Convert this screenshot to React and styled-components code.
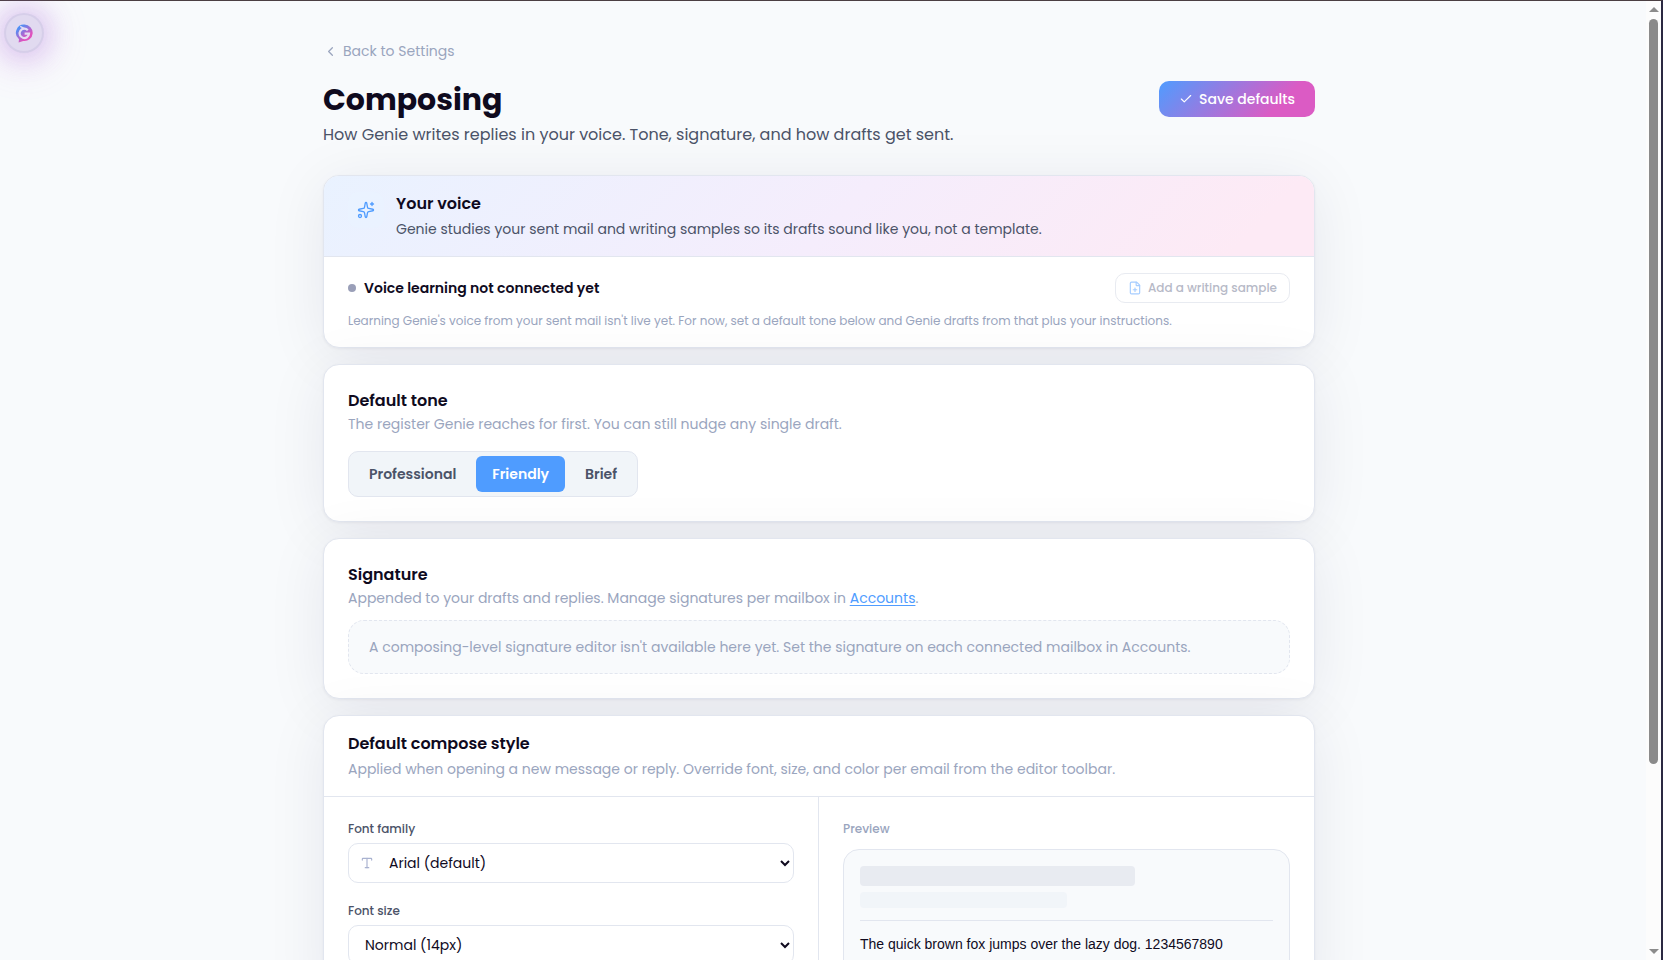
import React, { useState } from 'react';
import styled, { createGlobalStyle } from 'styled-components';
import { Check, ChevronLeft, FilePlus, Sparkles, Type } from 'lucide-react';

const GlobalStyle = createGlobalStyle`
  * {
    box-sizing: border-box;
  }

  :root {
    --bg: #f8fafc;
    --card: #ffffff;
    --ink: #0f0a1e;
    --ink-soft: #4b5368;
    --muted: #9aa5be;
    --line: #e2e6ef;
    --blue: #4f9cff;
    --pink: #db5bc4;
  }

  body {
    margin: 0;
    background: var(--bg);
    color: var(--ink);
    font-family: Poppins, Inter, sans-serif;
    font-size: 14px;
    line-height: 21px;
  }

  h1, h2, p {
    margin: 0;
  }

  button, select {
    font-family: inherit;
  }
`;

const Frame = styled.div`
  display: grid;
  grid-template-columns: minmax(0, 1fr) 15px;
  height: 100vh;
  overflow: hidden;
  border-top: 1px solid #4b3f42;
  border-right: 2px solid #2b2942;
`;

const Viewport = styled.div`
  overflow: hidden;
`;

const Scrollbar = styled.div`
  display: flex;
  flex-direction: column;
  align-items: center;
  justify-content: space-between;
  padding: 6px 0;
  background: #fcfcfc;
`;

const ScrollArrow = styled.span`
  border: 5px solid transparent;
  border-top-width: 0;
  border-bottom: 5px solid #8b8b8b;
  transform: ${({ $down }) => ($down ? 'rotate(180deg)' : 'none')};
`;

const ScrollTrack = styled.div`
  flex: 1;
  width: 9px;
  margin: 7px 0;
`;

const ScrollThumb = styled.div`
  height: 80.7%;
  border-radius: 5px;
  background: #8b8b8b;
`;

const Page = styled.main`
  max-width: 1040px;
  margin: 0 auto;
  padding: 40px 28px 40px 20px;
`;

const BackLink = styled.a`
  display: flex;
  align-items: center;
  gap: 5px;
  width: fit-content;
  color: var(--muted);
  text-decoration: none;
`;

const PageHeader = styled.header`
  display: flex;
  align-items: flex-start;
  justify-content: space-between;
  margin: 16px 0 28px;
`;

const PageTitle = styled.h1`
  font-size: 30px;
  line-height: 44px;
  font-weight: 700;
`;

const PageLead = styled.p`
  margin-top: 1px;
  font-size: 16px;
  line-height: 24px;
  color: var(--ink-soft);
`;

const SaveButton = styled.button`
  display: flex;
  align-items: center;
  justify-content: center;
  gap: 6px;
  height: 36px;
  margin-top: 3px;
  padding: 0 20px;
  border: 0;
  border-radius: 10px;
  color: white;
  background: linear-gradient(135deg, var(--blue) 0%, var(--pink) 75%);
  font-size: 14px;
  font-weight: 500;
`;

const Cards = styled.div`
  display: flex;
  flex-direction: column;
  gap: 16px;
`;

const Card = styled.section`
  border: 1px solid var(--line);
  border-radius: 16px;
  background: var(--card);
  box-shadow: 0 1px 3px rgba(20, 15, 60, 0.05), 0 8px 60px rgba(20, 15, 60, 0.08);
`;

const PaddedCard = styled(Card)`
  padding: 24px;
`;

const CardHeader = styled.div`
  display: flex;
  gap: 12px;
  padding: 16px 24px;
  border-bottom: 1px solid var(--line);
  border-radius: 15px 15px 0 0;
  background: ${({ $tinted }) =>
    $tinted ? 'linear-gradient(135deg, #e9f2ff 0%, #f5edfc 52%, #fdeaf5 92%)' : 'none'};
`;

const IconTile = styled.div`
  display: grid;
  place-items: center;
  width: 36px;
  height: 36px;
  border-radius: 10px;
  color: var(--blue);
  background: rgba(233, 244, 255, 0.6);
`;

const CardTitle = styled.h2`
  font-size: 16px;
  line-height: 24px;
  font-weight: 600;
`;

const CardText = styled.p`
  margin-top: ${({ $roomy }) => ($roomy ? '3px' : '1px')};
  color: ${({ $strong }) => ($strong ? 'var(--ink-soft)' : 'var(--muted)')};

  a {
    color: var(--blue);
    text-underline-offset: 2px;
  }
`;

const VoiceBody = styled.div`
  padding: 16px 24px 17px;
`;

const VoiceRow = styled.div`
  display: flex;
  align-items: center;
  justify-content: space-between;
`;

const VoiceStatus = styled.strong`
  display: flex;
  align-items: center;
  gap: 8px;
  font-weight: 600;

  &::before {
    content: '';
    width: 8px;
    height: 8px;
    border-radius: 50%;
    background: #9a9fb8;
  }
`;

const SampleButton = styled.button`
  display: flex;
  align-items: center;
  gap: 6px;
  height: 30px;
  padding: 0 12px;
  border: 1px solid #d3d8e4;
  border-radius: 10px;
  color: #6f7590;
  background: white;
  font-size: 12px;
  font-weight: 500;
  opacity: 0.5;

  svg {
    color: var(--blue);
  }
`;

const VoiceNote = styled.p`
  margin-top: 9px;
  font-size: 12px;
  line-height: 18px;
  color: var(--muted);
`;

const ToneGroup = styled.div`
  display: inline-flex;
  gap: 4px;
  margin-top: 16px;
  padding: 4px;
  border: 1px solid var(--line);
  border-radius: 10px;
  background: #f1f5f9;
  vertical-align: top;
`;

const ToneButton = styled.button`
  height: 36px;
  padding: 0 16px;
  border: 0;
  border-radius: 6px;
  color: ${({ $active }) => ($active ? 'white' : 'var(--ink-soft)')};
  background: ${({ $active }) => ($active ? 'var(--blue)' : 'transparent')};
  font-size: 14px;
  font-weight: 600;
`;

const SignatureNotice = styled.p`
  margin-top: 11px;
  padding: 16px 20px 15px;
  border: 1px dashed var(--line);
  border-radius: 16px;
  color: var(--muted);
  background: var(--bg);
`;

const StyleColumns = styled.div`
  display: grid;
  grid-template-columns: 1fr 1fr;
`;

const StyleColumn = styled.div`
  display: flex;
  flex-direction: column;
  gap: 20px;
  padding: 24px;

  & + & {
    gap: 12px;
  }

  &:first-child {
    border-right: 1px solid var(--line);
  }
`;

const Field = styled.div`
  display: flex;
  flex-direction: column;
  gap: 6px;
`;

const FieldLabel = styled.label`
  font-size: 12px;
  line-height: 16px;
  font-weight: 500;
  color: var(--ink-soft);
`;

const PreviewLabel = styled.div`
  font-size: 12px;
  line-height: 16px;
  font-weight: 500;
  color: var(--muted);
`;

const SelectWrap = styled.div`
  position: relative;

  svg {
    position: absolute;
    top: 13px;
    left: 12px;
    color: #a9b2d0;
  }
`;

const Select = styled.select`
  display: block;
  width: 100%;
  height: 40px;
  padding: 0 0 0 ${({ $withIcon }) => ($withIcon ? '36px' : '12px')};
  border: 1px solid var(--line);
  border-radius: 10px;
  color: var(--ink);
  background: white;
  font-size: 14px;
`;

const PreviewBox = styled.div`
  padding: 16px;
  border: 1px solid var(--line);
  border-radius: 16px;
  background: var(--bg);
`;

const PreviewBar = styled.div`
  width: ${({ $minor }) => ($minor ? '50%' : '66.6%')};
  height: ${({ $minor }) => ($minor ? '16px' : '20px')};
  margin-bottom: ${({ $minor }) => ($minor ? '12px' : '6px')};
  border-radius: 4px;
  background: ${({ $minor }) => ($minor ? '#f1f5f9' : '#e8ebf1')};
`;

const PreviewText = styled.p`
  padding: 12px 0;
  border-top: 1px solid var(--line);
  font-family: Arial, 'Liberation Sans', sans-serif;
  font-size: 14px;
  line-height: 22px;
`;

const GenieButton = styled.button`
  position: fixed;
  top: 13px;
  left: 4px;
  display: grid;
  place-items: center;
  width: 40px;
  height: 40px;
  padding: 0;
  border: 2px solid rgba(190, 180, 220, 0.3);
  border-radius: 50%;
  background: #e1daf0;
  box-shadow: 0 0 24px 6px rgba(160, 110, 220, 0.26), 0 4px 40px 8px rgba(200, 100, 220, 0.2);
`;

const tones = ['Professional', 'Friendly', 'Brief'];

function GenieLogo() {
  return (
    <svg width="18" height="19" viewBox="0 0 18 19" aria-hidden="true">
      <defs>
        <linearGradient id="genie" x1="0" y1="0" x2="0.8" y2="1">
          <stop offset="0.2" stopColor="#4f8ff5" />
          <stop offset="0.75" stopColor="#e052bd" />
        </linearGradient>
      </defs>
      <path
        d="M9.4 0.6a8.2 8.2 0 1 1-1.2 16.3L3.6 18.6l0.4-3.4A8.2 8.2 0 0 1 9.4 0.6z"
        fill="url(#genie)"
      />
      <path
        d="M12.8 6.2A4.7 4.7 0 1 0 14 9.6H9.6"
        fill="none"
        stroke="#e6dcf3"
        strokeWidth="2.2"
      />
      <path d="M5.2 2.4L9.4 4.6" stroke="#e6dcf3" strokeWidth="1.4" />
    </svg>
  );
}

export default function App() {
  const [tone, setTone] = useState('Friendly');

  return (
    <>
      <GlobalStyle />
      <Frame>
        <Viewport>
          <Page>
            <BackLink href="#settings">
              <ChevronLeft size={15} />
              Back to Settings
            </BackLink>

            <PageHeader>
              <div>
                <PageTitle>Composing</PageTitle>
                <PageLead>
                  How Genie writes replies in your voice. Tone, signature, and how drafts get sent.
                </PageLead>
              </div>
              <SaveButton type="button">
                <Check size={14} />
                Save defaults
              </SaveButton>
            </PageHeader>

            <Cards>
              <Card>
                <CardHeader $tinted>
                  <IconTile>
                    <Sparkles size={18} strokeWidth={1.75} />
                  </IconTile>
                  <div>
                    <CardTitle>Your voice</CardTitle>
                    <CardText $roomy $strong>
                      Genie studies your sent mail and writing samples so its drafts sound like you, not a template.
                    </CardText>
                  </div>
                </CardHeader>
                <VoiceBody>
                  <VoiceRow>
                    <VoiceStatus>Voice learning not connected yet</VoiceStatus>
                    <SampleButton type="button" disabled>
                      <FilePlus size={14} />
                      Add a writing sample
                    </SampleButton>
                  </VoiceRow>
                  <VoiceNote>
                    Learning Genie's voice from your sent mail isn't live yet. For now, set a default tone below and Genie drafts from that plus your instructions.
                  </VoiceNote>
                </VoiceBody>
              </Card>

              <PaddedCard>
                <CardTitle>Default tone</CardTitle>
                <CardText>
                  The register Genie reaches for first. You can still nudge any single draft.
                </CardText>
                <ToneGroup role="group" aria-label="Default tone">
                  {tones.map((name) => (
                    <ToneButton
                      key={name}
                      type="button"
                      $active={tone === name}
                      aria-pressed={tone === name}
                      onClick={() => setTone(name)}
                    >
                      {name}
                    </ToneButton>
                  ))}
                </ToneGroup>
              </PaddedCard>

              <PaddedCard>
                <CardTitle>Signature</CardTitle>
                <CardText>
                  Appended to your drafts and replies. Manage signatures per mailbox in{' '}
                  <a href="#accounts">Accounts</a>.
                </CardText>
                <SignatureNotice>
                  A composing-level signature editor isn't available here yet. Set the signature on each connected mailbox in Accounts.
                </SignatureNotice>
              </PaddedCard>

              <Card>
                <CardHeader>
                  <div>
                    <CardTitle>Default compose style</CardTitle>
                    <CardText $roomy>
                      Applied when opening a new message or reply. Override font, size, and color per email from the editor toolbar.
                    </CardText>
                  </div>
                </CardHeader>
                <StyleColumns>
                  <StyleColumn>
                    <Field>
                      <FieldLabel htmlFor="font-family">Font family</FieldLabel>
                      <SelectWrap>
                        <Select id="font-family" $withIcon>
                          <option>Arial (default)</option>
                        </Select>
                        <Type size={14} />
                      </SelectWrap>
                    </Field>
                    <Field>
                      <FieldLabel htmlFor="font-size">Font size</FieldLabel>
                      <Select id="font-size">
                        <option>Normal (14px)</option>
                      </Select>
                    </Field>
                  </StyleColumn>
                  <StyleColumn>
                    <PreviewLabel>Preview</PreviewLabel>
                    <PreviewBox>
                      <PreviewBar />
                      <PreviewBar $minor />
                      <PreviewText>
                        The quick brown fox jumps over the lazy dog. 1234567890
                      </PreviewText>
                    </PreviewBox>
                  </StyleColumn>
                </StyleColumns>
              </Card>
            </Cards>
          </Page>
        </Viewport>

        <Scrollbar aria-hidden="true">
          <ScrollArrow />
          <ScrollTrack>
            <ScrollThumb />
          </ScrollTrack>
          <ScrollArrow $down />
        </Scrollbar>
      </Frame>

      <GenieButton type="button" aria-label="Genie">
        <GenieLogo />
      </GenieButton>
    </>
  );
}
